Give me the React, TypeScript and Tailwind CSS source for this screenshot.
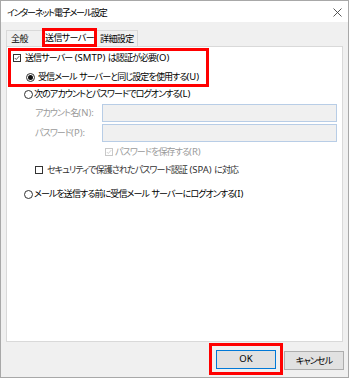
import React from "react";

const font = "font-['Noto_Sans_CJK_JP',sans-serif] [font-feature-settings:'palt']";

function T({ s, tight = "body" }: { s: string; tight?: "body" | "title" | "tab" }) {
  const parts = s.split(/([\x00-\x7F]+)/).filter((p) => p.length > 0);
  const cjk =
    tight === "title" ? "tracking-[-1.2px]" : tight === "tab" ? "tracking-[-0.6px]" : "tracking-[-0.9px]";
  return (
    <span className="leading-none whitespace-nowrap">
      {parts.map((p, i) =>
        /^[\x00-\x7F]+$/.test(p) ? (
          <span key={i} className="font-['Noto_Sans',sans-serif] text-[9.5px] tracking-normal whitespace-pre">
            {p}
          </span>
        ) : (
          <span key={i} className={cjk}>
            {p}
          </span>
        )
      )}
    </span>
  );
}

function Check({ disabled = false, checked = false }: { disabled?: boolean; checked?: boolean }) {
  return (
    <div
      className={`w-[8px] h-[8px] border bg-white flex items-center justify-center shrink-0 ${
        disabled ? "border-[#c8c8c8]" : "border-[#333333]"
      }`}
    >
      {checked && (
        <svg width="8" height="8" viewBox="0 0 8 8">
          <path
            d="M1 4 L3 6 L7 1.5"
            fill="none"
            stroke={disabled ? "#c0c0c0" : "#222222"}
            strokeWidth="1"
          />
        </svg>
      )}
    </div>
  );
}

function Radio({ checked = false }: { checked?: boolean }) {
  return (
    <div className="w-[9px] h-[9px] rounded-full border border-[#333333] bg-white flex items-center justify-center shrink-0">
      {checked && <div className="w-[5px] h-[5px] rounded-full bg-[#111111]" />}
    </div>
  );
}

export default function App() {
  return (
    <div className={`w-[350px] h-[379px] bg-white ${font} text-[9px] text-black`}>
      <div className="w-[349px] h-[378px] border border-[#a8a8a8] flex flex-col bg-[#f0f0f0]">
        {/* title bar */}
        <div className="h-[21px] bg-white flex items-center justify-between pl-[6px] pr-[6px] shrink-0">
          <span className="pt-[3px] text-[9px]">
            <T s="インターネット電子メール設定" tight="title" />
          </span>
          <svg width="9" height="9" viewBox="0 0 9 9" className="mt-[2px]">
            <path d="M0.5 0.5 L8.5 8.5 M8.5 0.5 L0.5 8.5" stroke="#444" strokeWidth="0.9" />
          </svg>
        </div>

        {/* tabs */}
        <div className="h-[24px] flex items-end pl-[5px] shrink-0">
          <div className="h-[16px] w-[37px] pl-[4px] border border-b-0 border-[#d9d9d9] flex items-center">
            <T s="全般" tight="tab" />
          </div>
          <div className="border-[3px] border-[#ff0000] h-[19px] w-[55px] -mb-[1px] relative z-10 -ml-[1px]">
            <div className="h-full bg-white flex items-center justify-center">
              <T s="送信サーバー" tight="tab" />
            </div>
          </div>
          <div className="h-[16px] px-[3px] border border-b-0 border-l-0 border-[#d9d9d9] flex items-center">
            <T s="詳細設定" tight="tab" />
          </div>
        </div>

        {/* panel */}
        <div className="mx-[5px] h-[296px] bg-white border border-[#d9d9d9] pl-[1px] pt-[1px] shrink-0">
          <div className="w-[201px] h-[39px] border-[3px] border-[#ff0000] pl-[2px] flex flex-col">
            <div className="h-[14px] flex items-center gap-[4px]">
              <Check checked />
              <T s="送信サーバー (SMTP) は認証が必要(O)" />
            </div>
            <div className="h-[14px] mt-[5px] flex items-center gap-[3px] pl-[13px]">
              <Radio checked />
              <T s="受信メール サーバーと同じ設定を使用する(U)" />
            </div>
          </div>

          <div className="h-[14px] flex items-center gap-[1px] pl-[16px]">
            <Radio />
            <T s="次のアカウントとパスワードでログオンする(L)" />
          </div>

          <div className="h-[18px] mt-[3px] flex items-center pl-[27px] pr-[5px]">
            <span className="w-[67px] text-[#9a9a9a]">
              <T s="アカウント名(N):" />
            </span>
            <div className="flex-1 h-[18px] bg-[#f0f0f0] border border-[#b8cde6]" />
          </div>
          <div className="h-[18px] mt-[2px] flex items-center pl-[27px] pr-[5px]">
            <span className="w-[67px] text-[#9a9a9a]">
              <T s="パスワード(P):" />
            </span>
            <div className="flex-1 h-[18px] bg-[#f0f0f0] border border-[#b8cde6]" />
          </div>

          <div className="h-[14px] mt-[3px] flex items-center gap-[2px] pl-[97px]">
            <Check checked disabled />
            <span className="text-[#9a9a9a]">
              <T s="パスワードを保存する(R)" />
            </span>
          </div>
          <div className="h-[14px] mt-[4px] flex items-center gap-[4px] pl-[27px]">
            <Check />
            <span className="text-[#333333]">
              <T s="セキュリティで保護されたパスワード認証 (SPA) に対応" />
            </span>
          </div>

          <div className="h-[14px] mt-[10px] flex items-center gap-[1px] pl-[16px]">
            <Radio />
            <T s="メールを送信する前に受信メール サーバーにログオンする(I)" />
          </div>
        </div>

        {/* footer */}
        <div className="flex justify-end items-start pt-[1px] pr-[4px]">
          <div className="w-[74px] h-[32px] border-[3px] border-[#ff0000] flex items-center justify-center">
            <div className="w-[60px] h-[19px] bg-[#e1e1e1] border border-[#0078d7] flex items-center justify-center">
              <T s="OK" />
            </div>
          </div>
          <div className="ml-[1px] mt-[8px] w-[60px] h-[19px] bg-[#e1e1e1] border border-[#adadad] flex items-center justify-center">
            <T s="キャンセル" />
          </div>
        </div>
      </div>
    </div>
  );
}
